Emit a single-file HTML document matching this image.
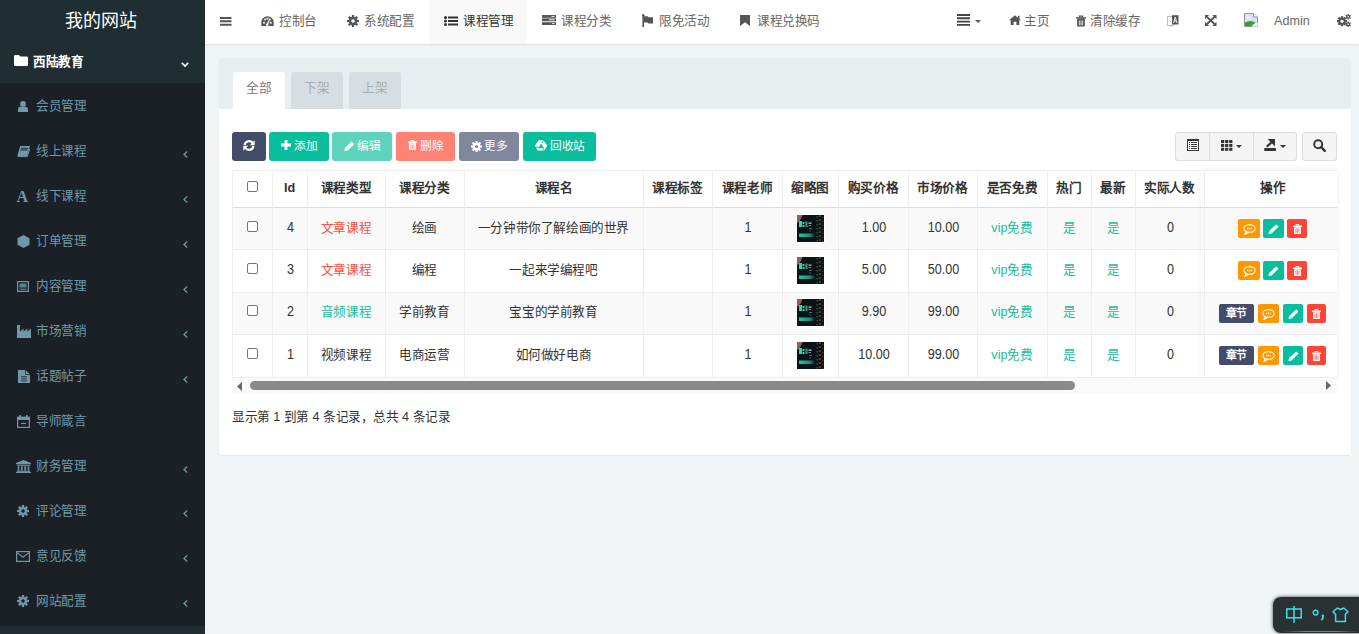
<!DOCTYPE html>
<html lang="zh-CN"><head><meta charset="utf-8"><style>
*{box-sizing:border-box;margin:0;padding:0}
html,body{width:1359px;height:634px;overflow:hidden}
body{font-family:"Liberation Sans",sans-serif;font-size:13px;color:#333;background:#f1f4f6;position:relative}
.a{position:absolute}
svg{position:absolute;overflow:visible}
.t{position:absolute;white-space:nowrap;line-height:22.222px;height:22.222px;transform:scale(.9);transform-origin:0 0}
</style></head><body>
<div class="a" style="left:0px;top:0px;width:205px;height:634px;background:#1b2026;"></div>
<div class="a" style="left:0px;top:0px;width:205px;height:83px;background:#202d33;"></div>
<div class="a" style="left:0px;top:626px;width:205px;height:8px;background:#202d33;"></div>
<div class="t" style="left:65px;top:10.8px;font-size:20.000px;color:#fff;font-weight:normal;">我的网站</div>
<svg style="left:14px;top:55px" width="14" height="11" viewBox="0 0 14 11"><path d="M0 1.2Q0 0 1.2 0H5L6.5 1.6H12.8Q14 1.6 14 2.8V9.8Q14 11 12.8 11H1.2Q0 11 0 9.8Z" fill="#fff"/></svg>
<div class="t" style="left:33px;top:52px;font-size:14.000px;color:#fff;font-weight:bold;">西陆教育</div>
<svg style="left:181px;top:62px" width="8" height="5" viewBox="0 0 8 5"><path d="M0.8 0.8L4 4L7.2 0.8" stroke="#fff" stroke-width="1.7" fill="none"/></svg>
<div class="t" style="left:36px;top:96px;font-size:14.000px;color:#6f98a8;font-weight:normal;">会员管理</div>
<div class="t" style="left:36px;top:141px;font-size:14.000px;color:#6f98a8;font-weight:normal;">线上课程</div>
<svg style="left:183px;top:150.5px" width="5" height="7" viewBox="0 0 5 7"><path d="M4.2 0.6L1 3.5L4.2 6.4" stroke="#6f98a8" stroke-width="1.3" fill="none"/></svg>
<div class="t" style="left:36px;top:186px;font-size:14.000px;color:#6f98a8;font-weight:normal;">线下课程</div>
<svg style="left:183px;top:195.5px" width="5" height="7" viewBox="0 0 5 7"><path d="M4.2 0.6L1 3.5L4.2 6.4" stroke="#6f98a8" stroke-width="1.3" fill="none"/></svg>
<div class="t" style="left:36px;top:231px;font-size:14.000px;color:#6f98a8;font-weight:normal;">订单管理</div>
<svg style="left:183px;top:240.5px" width="5" height="7" viewBox="0 0 5 7"><path d="M4.2 0.6L1 3.5L4.2 6.4" stroke="#6f98a8" stroke-width="1.3" fill="none"/></svg>
<div class="t" style="left:36px;top:276px;font-size:14.000px;color:#6f98a8;font-weight:normal;">内容管理</div>
<svg style="left:183px;top:285.5px" width="5" height="7" viewBox="0 0 5 7"><path d="M4.2 0.6L1 3.5L4.2 6.4" stroke="#6f98a8" stroke-width="1.3" fill="none"/></svg>
<div class="t" style="left:36px;top:321px;font-size:14.000px;color:#6f98a8;font-weight:normal;">市场营销</div>
<svg style="left:183px;top:330.5px" width="5" height="7" viewBox="0 0 5 7"><path d="M4.2 0.6L1 3.5L4.2 6.4" stroke="#6f98a8" stroke-width="1.3" fill="none"/></svg>
<div class="t" style="left:36px;top:366px;font-size:14.000px;color:#6f98a8;font-weight:normal;">话题帖子</div>
<svg style="left:183px;top:375.5px" width="5" height="7" viewBox="0 0 5 7"><path d="M4.2 0.6L1 3.5L4.2 6.4" stroke="#6f98a8" stroke-width="1.3" fill="none"/></svg>
<div class="t" style="left:36px;top:411px;font-size:14.000px;color:#6f98a8;font-weight:normal;">导师箴言</div>
<div class="t" style="left:36px;top:456px;font-size:14.000px;color:#6f98a8;font-weight:normal;">财务管理</div>
<svg style="left:183px;top:465.5px" width="5" height="7" viewBox="0 0 5 7"><path d="M4.2 0.6L1 3.5L4.2 6.4" stroke="#6f98a8" stroke-width="1.3" fill="none"/></svg>
<div class="t" style="left:36px;top:500.5px;font-size:14.000px;color:#6f98a8;font-weight:normal;">评论管理</div>
<svg style="left:183px;top:510.0px" width="5" height="7" viewBox="0 0 5 7"><path d="M4.2 0.6L1 3.5L4.2 6.4" stroke="#6f98a8" stroke-width="1.3" fill="none"/></svg>
<div class="t" style="left:36px;top:545.5px;font-size:14.000px;color:#6f98a8;font-weight:normal;">意见反馈</div>
<svg style="left:183px;top:555.0px" width="5" height="7" viewBox="0 0 5 7"><path d="M4.2 0.6L1 3.5L4.2 6.4" stroke="#6f98a8" stroke-width="1.3" fill="none"/></svg>
<div class="t" style="left:36px;top:590.5px;font-size:14.000px;color:#6f98a8;font-weight:normal;">网站配置</div>
<svg style="left:183px;top:600.0px" width="5" height="7" viewBox="0 0 5 7"><path d="M4.2 0.6L1 3.5L4.2 6.4" stroke="#6f98a8" stroke-width="1.3" fill="none"/></svg>
<svg style="left:18px;top:101px" width="10" height="11" viewBox="0 0 10 11"><circle cx="5" cy="2.9" r="2.9" fill="#6f98a8"/><path d="M0 11V8.3Q0 5.8 2.5 5.8H7.5Q10 5.8 10 8.3V11Z" fill="#6f98a8"/></svg>
<svg style="left:17px;top:146px" width="13" height="11" viewBox="0 0 13 11"><path d="M3.2 0H13L10 10H0.3Z" fill="#6f98a8"/><path d="M4 2.3H11M3.5 4H10.5" stroke="#1b2026" stroke-width=".9"/><path d="M0.8 10.6H10.3L12.6 3" stroke="#6f98a8" stroke-width="1" fill="none"/></svg>
<svg style="left:16px;top:190px" width="14" height="13" viewBox="0 0 14 13"><text x="0.5" y="12" font-family="Liberation Serif" font-weight="bold" font-size="16" fill="#6f98a8">A</text></svg>
<svg style="left:17px;top:235px" width="13" height="13" viewBox="0 0 13 13"><path d="M6.5 0L12.5 3.3V9.7L6.5 13L0.5 9.7V3.3Z" fill="#6f98a8"/></svg>
<svg style="left:17px;top:281px" width="12" height="11" viewBox="0 0 12 11"><rect x=".6" y=".6" width="10.8" height="9.8" fill="none" stroke="#6f98a8" stroke-width="1.2"/><rect x="2.5" y="2.5" width="7" height="4" fill="#6f98a8" opacity=".8"/><path d="M2.5 8.2H9.5" stroke="#6f98a8" stroke-width="1"/></svg>
<svg style="left:16.5px;top:325px" width="14" height="13" viewBox="0 0 14 13"><path d="M0 0H3V6.5L6.6 3.5V6.5L10.3 3.5L10.3 6.5L14 3.5V13H0Z" fill="#6f98a8"/></svg>
<svg style="left:17.5px;top:370px" width="12" height="13" viewBox="0 0 12 13"><path d="M0 0H7.5L12 4.5V13H0Z" fill="#6f98a8"/><path d="M7.5 0V4.5H12" fill="none" stroke="#1b2026" stroke-width=".7"/><path d="M3 6.6H9M3 8.8H9M3 11H9" stroke="#1b2026" stroke-width=".8"/></svg>
<svg style="left:17px;top:415px" width="13" height="13" viewBox="0 0 13 13"><rect x=".6" y="2.2" width="11.8" height="10.2" fill="none" stroke="#6f98a8" stroke-width="1.2"/><rect x="0" y="2" width="13" height="3" fill="#6f98a8"/><path d="M3.2 0V3.5M9.8 0V3.5" stroke="#6f98a8" stroke-width="1.6"/><path d="M4 8.5H9" stroke="#6f98a8" stroke-width="1.2"/></svg>
<svg style="left:15.5px;top:460px" width="15" height="13" viewBox="0 0 15 13"><path d="M7.5 0L15 3V4.2H0V3Z" fill="#6f98a8"/><rect x="1" y="4.8" width="13" height="1" fill="#6f98a8"/><path d="M2.5 6.2V10.8M5.8 6.2V10.8M9.2 6.2V10.8M12.5 6.2V10.8" stroke="#6f98a8" stroke-width="1.6"/><rect x="1" y="10.8" width="13" height="1" fill="#6f98a8"/><rect x="0" y="11.8" width="15" height="1.2" fill="#6f98a8"/></svg>
<svg style="left:17px;top:504.5px" width="12" height="12" viewBox="0 0 12 12"><g transform="translate(6,6)"><circle r="4.2" fill="#6f98a8"/><rect x="-1.1400000000000001" y="-6" width="2.2800000000000002" height="2.96" fill="#6f98a8" transform="rotate(0.0)"/><rect x="-1.1400000000000001" y="-6" width="2.2800000000000002" height="2.96" fill="#6f98a8" transform="rotate(45.0)"/><rect x="-1.1400000000000001" y="-6" width="2.2800000000000002" height="2.96" fill="#6f98a8" transform="rotate(90.0)"/><rect x="-1.1400000000000001" y="-6" width="2.2800000000000002" height="2.96" fill="#6f98a8" transform="rotate(135.0)"/><rect x="-1.1400000000000001" y="-6" width="2.2800000000000002" height="2.96" fill="#6f98a8" transform="rotate(180.0)"/><rect x="-1.1400000000000001" y="-6" width="2.2800000000000002" height="2.96" fill="#6f98a8" transform="rotate(225.0)"/><rect x="-1.1400000000000001" y="-6" width="2.2800000000000002" height="2.96" fill="#6f98a8" transform="rotate(270.0)"/><rect x="-1.1400000000000001" y="-6" width="2.2800000000000002" height="2.96" fill="#6f98a8" transform="rotate(315.0)"/><circle r="1.8" fill="#1b2026"/></g></svg>
<svg style="left:16px;top:550.5px" width="14" height="11" viewBox="0 0 14 11"><rect x=".6" y=".6" width="12.8" height="9.8" fill="none" stroke="#6f98a8" stroke-width="1.2"/><path d="M1 1.6L7 6.3L13 1.6" stroke="#6f98a8" stroke-width="1.2" fill="none"/></svg>
<svg style="left:17px;top:594.5px" width="12" height="12" viewBox="0 0 12 12"><g transform="translate(6,6)"><circle r="4.2" fill="#6f98a8"/><rect x="-1.1400000000000001" y="-6" width="2.2800000000000002" height="2.96" fill="#6f98a8" transform="rotate(0.0)"/><rect x="-1.1400000000000001" y="-6" width="2.2800000000000002" height="2.96" fill="#6f98a8" transform="rotate(45.0)"/><rect x="-1.1400000000000001" y="-6" width="2.2800000000000002" height="2.96" fill="#6f98a8" transform="rotate(90.0)"/><rect x="-1.1400000000000001" y="-6" width="2.2800000000000002" height="2.96" fill="#6f98a8" transform="rotate(135.0)"/><rect x="-1.1400000000000001" y="-6" width="2.2800000000000002" height="2.96" fill="#6f98a8" transform="rotate(180.0)"/><rect x="-1.1400000000000001" y="-6" width="2.2800000000000002" height="2.96" fill="#6f98a8" transform="rotate(225.0)"/><rect x="-1.1400000000000001" y="-6" width="2.2800000000000002" height="2.96" fill="#6f98a8" transform="rotate(270.0)"/><rect x="-1.1400000000000001" y="-6" width="2.2800000000000002" height="2.96" fill="#6f98a8" transform="rotate(315.0)"/><circle r="1.8" fill="#1b2026"/></g></svg>
<div class="a" style="left:205px;top:0px;width:1154px;height:44px;background:#fff;box-shadow:0 1px 2px rgba(0,0,0,.09)"></div>
<div class="a" style="left:429px;top:0px;width:98px;height:44px;background:#f9f9f9;"></div>
<svg style="left:219.5px;top:16px" width="12" height="10" viewBox="0 0 12 10"><path d="M0 2H11.5M0 5.3H11.5M0 8.8H11.5" stroke="#555" stroke-width="1.9"/></svg>
<svg style="left:261px;top:16px" width="13" height="10" viewBox="0 0 13 10"><path d="M0.3 10V6.5A6.2 6.2 0 0 1 12.7 6.5V10Z" fill="#555"/><circle cx="3" cy="6.8" r="1" fill="#fff"/><circle cx="4.2" cy="3.6" r="1" fill="#fff"/><circle cx="6.5" cy="2.5" r="1" fill="#fff"/><circle cx="9.9" cy="6.8" r="1" fill="#fff"/><circle cx="8.8" cy="3.6" r="1" fill="#fff"/><path d="M6.2 9L8 4.5" stroke="#fff" stroke-width="1.3"/><circle cx="6.2" cy="8.8" r="1.3" fill="#fff"/></svg>
<div class="t" style="left:279px;top:11px;font-size:14.000px;color:#666;font-weight:normal;">控制台</div>
<svg style="left:347px;top:15px" width="12" height="12" viewBox="0 0 12 12"><g transform="translate(6,6)"><circle r="4.2" fill="#555"/><rect x="-1.1400000000000001" y="-6" width="2.2800000000000002" height="2.96" fill="#555" transform="rotate(0.0)"/><rect x="-1.1400000000000001" y="-6" width="2.2800000000000002" height="2.96" fill="#555" transform="rotate(45.0)"/><rect x="-1.1400000000000001" y="-6" width="2.2800000000000002" height="2.96" fill="#555" transform="rotate(90.0)"/><rect x="-1.1400000000000001" y="-6" width="2.2800000000000002" height="2.96" fill="#555" transform="rotate(135.0)"/><rect x="-1.1400000000000001" y="-6" width="2.2800000000000002" height="2.96" fill="#555" transform="rotate(180.0)"/><rect x="-1.1400000000000001" y="-6" width="2.2800000000000002" height="2.96" fill="#555" transform="rotate(225.0)"/><rect x="-1.1400000000000001" y="-6" width="2.2800000000000002" height="2.96" fill="#555" transform="rotate(270.0)"/><rect x="-1.1400000000000001" y="-6" width="2.2800000000000002" height="2.96" fill="#555" transform="rotate(315.0)"/><circle r="1.8" fill="#fff"/></g></svg>
<div class="t" style="left:364.2px;top:11px;font-size:14.000px;color:#666;font-weight:normal;">系统配置</div>
<svg style="left:444px;top:16px" width="14" height="10" viewBox="0 0 14 10"><circle cx="1.5" cy="1.5" r="1.5" fill="#333"/><circle cx="1.5" cy="5" r="1.5" fill="#333"/><circle cx="1.5" cy="8.5" r="1.5" fill="#333"/><path d="M4 1.5H14M4 5H14M4 8.5H14" stroke="#333" stroke-width="2"/></svg>
<div class="t" style="left:463px;top:11px;font-size:14.000px;color:#333;font-weight:normal;">课程管理</div>
<svg style="left:542px;top:15px" width="14" height="10" viewBox="0 0 14 10"><rect x="0" y="0" width="14" height="2.8" fill="#555"/><rect x="0" y="3.4" width="14" height="2.8" fill="#555"/><rect x="0" y="7.2" width="14" height="2.8" fill="#555"/><path d="M9.5 1.4H12.5M7 4.8H12.5M10 8.6H12.5" stroke="#fff" stroke-width=".9"/></svg>
<div class="t" style="left:561px;top:11px;font-size:14.000px;color:#666;font-weight:normal;">课程分类</div>
<svg style="left:642px;top:14px" width="11" height="13" viewBox="0 0 11 13"><path d="M1.2 1V13" stroke="#555" stroke-width="1.6"/><circle cx="1.2" cy="1.2" r="1.2" fill="#555"/><path d="M2 2.2H5.5L6.5 3.2H11V9.5H6.5L5.5 8.5H2Z" fill="#555"/></svg>
<div class="t" style="left:659px;top:11px;font-size:14.000px;color:#666;font-weight:normal;">限免活动</div>
<svg style="left:740px;top:15px" width="10" height="11" viewBox="0 0 10 11"><path d="M0 0H10V11L5 7.3L0 11Z" fill="#555"/></svg>
<div class="t" style="left:757px;top:11px;font-size:14.000px;color:#666;font-weight:normal;">课程兑换码</div>
<svg style="left:957px;top:14px" width="13" height="12" viewBox="0 0 13 12"><path d="M0 1H13M0 4.3H13M0 7.6H13M0 10.9H13" stroke="#444" stroke-width="1.9"/></svg>
<svg style="left:975px;top:20px" width="6" height="3" viewBox="0 0 6 3"><path d="M0 0H6L3 3Z" fill="#555"/></svg>
<svg style="left:1009px;top:15px" width="12" height="10" viewBox="0 0 12 10"><path d="M6 0.3L12 5.3H10.3V10H7.4V6.8H4.6V10H1.7V5.3H0Z" fill="#555"/><rect x="9" y="0.8" width="1.6" height="3" fill="#555"/></svg>
<div class="t" style="left:1024.4px;top:11px;font-size:14.000px;color:#666;font-weight:normal;">主页</div>
<div style="position:absolute;left:1076px;top:15px;width:10px;height:12px"><svg style="left:0;top:0" width="10" height="12" viewBox="0 0 9 10"><rect x="0" y="1.6" width="9" height="1.4" fill="#555"/><path d="M3 2V.6H6V2" fill="none" stroke="#555" stroke-width="1"/><path d="M1 3.2H8V9.2Q8 10 7.2 10H1.8Q1 10 1 9.2Z" fill="#555"/><path d="M3 4.5V8.8M4.5 4.5V8.8M6 4.5V8.8" stroke="#fff" stroke-width=".7"/></svg></div>
<div class="t" style="left:1090.3px;top:11px;font-size:14.000px;color:#666;font-weight:normal;">清除缓存</div>
<svg style="left:1167px;top:14px" width="12" height="13" viewBox="0 0 12 13"><path d="M0.5 2.5H7V11.5H0.5Z" fill="#fff" stroke="#aaa" stroke-width=".8"/><path d="M5 1.2H11.5V10.5H5Z" fill="#555"/><path d="M6.5 9L8.2 3.2L10 9M7 7H9.4" stroke="#fff" stroke-width=".9" fill="none"/><path d="M2 6L4.5 9" stroke="#c88" stroke-width=".6"/><path d="M3 11.5L5 13" stroke="#aaa" stroke-width=".7"/></svg>
<svg style="left:1205px;top:15px" width="11.5" height="11" viewBox="0 0 11.5 11"><path d="M2 2L9.5 9M9.5 2L2 9" stroke="#555" stroke-width="1.9"/><path d="M0 0H4.2L0 4.2Z M11.5 0V4.2L7.3 0Z M0 11V6.8L4.2 11Z M11.5 11H7.3L11.5 6.8Z" fill="#555"/></svg>
<svg style="left:1244px;top:12px" width="14" height="15" viewBox="0 0 14 15"><path d="M0.5 1.5H9.5L13.5 5V14.5H0.5Z" fill="#d4e4f4" stroke="#8a8a8a" stroke-width=".9"/><path d="M9.5 1.5V5H13.5" fill="#fff" stroke="#8a8a8a" stroke-width=".9"/><path d="M1 14V10.5Q6 7.5 11.5 10.5L7.5 14Z" fill="#2aa52a"/><path d="M11.8 10.8L8 14.6H13.6V10.8Z" fill="#fff"/><ellipse cx="5" cy="5.5" rx="2" ry="1" fill="#fff"/></svg>
<div class="t" style="left:1274px;top:11px;font-size:14.000px;color:#666;font-weight:normal;">Admin</div>
<svg style="left:1337px;top:14px" width="14" height="13" viewBox="0 0 14 13"><g transform="translate(5,7.2)"><circle r="3.4" fill="#555"/><rect x="-1.2" y="-5" width="2.4" height="2.8" fill="#555" transform="rotate(0.0)"/><rect x="-1.2" y="-5" width="2.4" height="2.8" fill="#555" transform="rotate(45.0)"/><rect x="-1.2" y="-5" width="2.4" height="2.8" fill="#555" transform="rotate(90.0)"/><rect x="-1.2" y="-5" width="2.4" height="2.8" fill="#555" transform="rotate(135.0)"/><rect x="-1.2" y="-5" width="2.4" height="2.8" fill="#555" transform="rotate(180.0)"/><rect x="-1.2" y="-5" width="2.4" height="2.8" fill="#555" transform="rotate(225.0)"/><rect x="-1.2" y="-5" width="2.4" height="2.8" fill="#555" transform="rotate(270.0)"/><rect x="-1.2" y="-5" width="2.4" height="2.8" fill="#555" transform="rotate(315.0)"/><circle r="1.5" fill="#fff"/></g><g transform="translate(11.2,2.8)"><circle r="1.9" fill="#555"/><rect x="-0.65" y="-2.8" width="1.3" height="1.9000000000000001" fill="#555" transform="rotate(0.0)"/><rect x="-0.65" y="-2.8" width="1.3" height="1.9000000000000001" fill="#555" transform="rotate(60.0)"/><rect x="-0.65" y="-2.8" width="1.3" height="1.9000000000000001" fill="#555" transform="rotate(120.0)"/><rect x="-0.65" y="-2.8" width="1.3" height="1.9000000000000001" fill="#555" transform="rotate(180.0)"/><rect x="-0.65" y="-2.8" width="1.3" height="1.9000000000000001" fill="#555" transform="rotate(240.0)"/><rect x="-0.65" y="-2.8" width="1.3" height="1.9000000000000001" fill="#555" transform="rotate(300.0)"/><circle r="0.8" fill="#fff"/></g><g transform="translate(11.2,10.3)"><circle r="1.9" fill="#555"/><rect x="-0.65" y="-2.8" width="1.3" height="1.9000000000000001" fill="#555" transform="rotate(0.0)"/><rect x="-0.65" y="-2.8" width="1.3" height="1.9000000000000001" fill="#555" transform="rotate(60.0)"/><rect x="-0.65" y="-2.8" width="1.3" height="1.9000000000000001" fill="#555" transform="rotate(120.0)"/><rect x="-0.65" y="-2.8" width="1.3" height="1.9000000000000001" fill="#555" transform="rotate(180.0)"/><rect x="-0.65" y="-2.8" width="1.3" height="1.9000000000000001" fill="#555" transform="rotate(240.0)"/><rect x="-0.65" y="-2.8" width="1.3" height="1.9000000000000001" fill="#555" transform="rotate(300.0)"/><circle r="0.8" fill="#fff"/></g></svg>
<div class="a" style="left:219px;top:58px;width:1132px;height:397px;background:#fff;border-radius:3px;box-shadow:0 1px 1px rgba(0,0,0,.05)"></div>
<div class="a" style="left:219px;top:58px;width:1132px;height:51px;background:#e8edf0;border-radius:3px 3px 0 0"></div>
<div class="a" style="left:233px;top:72px;width:52px;height:37px;background:#fff;border-radius:3px 3px 0 0"></div>
<div class="t" style="left:233.0px;top:78px;width:57.778px;text-align:center;font-size:14.000px;color:#777;font-weight:normal;">全部</div>
<div class="a" style="left:291px;top:72px;width:52px;height:37px;background:#d6dee4;border-radius:3px 3px 0 0"></div>
<div class="t" style="left:291.0px;top:78px;width:57.778px;text-align:center;font-size:14.000px;color:#a3aeb2;font-weight:normal;">下架</div>
<div class="a" style="left:349px;top:72px;width:52px;height:37px;background:#d6dee4;border-radius:3px 3px 0 0"></div>
<div class="t" style="left:349.0px;top:78px;width:57.778px;text-align:center;font-size:14.000px;color:#a3aeb2;font-weight:normal;">上架</div>
<div class="a" style="left:232px;top:132px;width:34px;height:29px;background:#444c69;border-radius:3px"></div>
<svg style="left:243px;top:140px" width="12" height="11" viewBox="0 0 12 11"><path d="M1.6 5A4.4 4.4 0 0 1 9.9 3.6" stroke="#fff" stroke-width="2.1" fill="none"/><path d="M11.7 0.3V5.2H6.8Z" fill="#fff"/><path d="M10.4 6A4.4 4.4 0 0 1 2.1 7.4" stroke="#fff" stroke-width="2.1" fill="none"/><path d="M0.3 10.7V5.8H5.2Z" fill="#fff"/></svg>
<div class="a" style="left:269px;top:132px;width:60px;height:29px;background:#0abd9d;border-radius:3px"></div>
<svg style="left:281px;top:140px" width="10" height="10" viewBox="0 0 10 10"><path d="M5 0V10M0 5H10" stroke="#fff" stroke-width="2.8"/></svg>
<div class="t" style="left:294px;top:136px;font-size:13.000px;color:#fff;font-weight:500;">添加</div>
<div class="a" style="left:332px;top:132px;width:60px;height:29px;background:#5fd4bd;border-radius:3px"></div>
<svg style="left:344px;top:141px" width="11" height="10" viewBox="0 0 11 10"><path d="M7.6 0.6L10.4 3.2L3.6 9.6L0.4 10L0.9 6.9Z" fill="#fff"/></svg>
<div class="t" style="left:357px;top:136px;font-size:13.000px;color:#fff;font-weight:500;">编辑</div>
<div class="a" style="left:396px;top:132px;width:59px;height:29px;background:#fd8274;border-radius:3px"></div>
<svg style="left:408px;top:140px" width="9" height="10" viewBox="0 0 9 10"><rect x="0" y="1.6" width="9" height="1.4" fill="#fff"/><path d="M3 2V.6H6V2" fill="none" stroke="#fff" stroke-width="1"/><path d="M1 3.2H8V9.2Q8 10 7.2 10H1.8Q1 10 1 9.2Z" fill="#fff"/><path d="M3 4.5V8.8M4.5 4.5V8.8M6 4.5V8.8" stroke="#fd8274" stroke-width=".7"/></svg>
<div class="t" style="left:420px;top:136px;font-size:13.000px;color:#fff;font-weight:500;">删除</div>
<div class="a" style="left:459px;top:132px;width:60px;height:29px;background:#80869b;border-radius:3px"></div>
<svg style="left:470.5px;top:140.5px" width="11" height="11" viewBox="0 0 11 11"><g transform="translate(5.5,5.5)"><circle r="3.9" fill="#fff"/><rect x="-1.045" y="-5.5" width="2.09" height="2.7800000000000002" fill="#fff" transform="rotate(0.0)"/><rect x="-1.045" y="-5.5" width="2.09" height="2.7800000000000002" fill="#fff" transform="rotate(45.0)"/><rect x="-1.045" y="-5.5" width="2.09" height="2.7800000000000002" fill="#fff" transform="rotate(90.0)"/><rect x="-1.045" y="-5.5" width="2.09" height="2.7800000000000002" fill="#fff" transform="rotate(135.0)"/><rect x="-1.045" y="-5.5" width="2.09" height="2.7800000000000002" fill="#fff" transform="rotate(180.0)"/><rect x="-1.045" y="-5.5" width="2.09" height="2.7800000000000002" fill="#fff" transform="rotate(225.0)"/><rect x="-1.045" y="-5.5" width="2.09" height="2.7800000000000002" fill="#fff" transform="rotate(270.0)"/><rect x="-1.045" y="-5.5" width="2.09" height="2.7800000000000002" fill="#fff" transform="rotate(315.0)"/><circle r="1.6" fill="#80869b"/></g></svg>
<div class="t" style="left:484px;top:136px;font-size:13.000px;color:#fff;font-weight:500;">更多</div>
<div class="a" style="left:523px;top:132px;width:73px;height:29px;background:#0abd9d;border-radius:3px"></div>
<svg style="left:534.5px;top:139.7px" width="12.2" height="10.8" viewBox="0 0 12.2 10.8"><path fill-rule="evenodd" d="M3.6 0.2H8.4L12.2 5.6L9.6 10.6H2.6L0 5.6Z M6.1 3.4L9 8.2H3.2Z" fill="#fff"/><path d="M8.4 0.6L7.2 3.2M1 7L3.6 7.2M9.2 10.4L8 8" stroke="#0abd9d" stroke-width=".9"/></svg>
<div class="t" style="left:550px;top:136px;font-size:13.000px;color:#fff;font-weight:500;">回收站</div>
<div class="a" style="left:1175px;top:132px;width:122px;height:29px;background:#f4f4f4;border:1px solid #ddd;border-radius:3px"></div>
<div class="a" style="left:1209px;top:133px;width:1px;height:27px;background:#ddd;"></div>
<div class="a" style="left:1253px;top:133px;width:1px;height:27px;background:#ddd;"></div>
<div class="a" style="left:1302px;top:132px;width:35px;height:29px;background:#f4f4f4;border:1px solid #ddd;border-radius:3px"></div>
<svg style="left:1187px;top:139px" width="12" height="12" viewBox="0 0 12 12"><g shape-rendering="crispEdges"><rect x="0" y="0" width="12" height="12" fill="#333"/><rect x="1" y="2" width="10" height="9" fill="#fff"/><rect x="2" y="3" width="1" height="1" fill="#333"/><rect x="2" y="5" width="1" height="1" fill="#333"/><rect x="2" y="7" width="1" height="1" fill="#333"/><rect x="2" y="9" width="1" height="1" fill="#333"/><rect x="4" y="3" width="6" height="1" fill="#333"/><rect x="4" y="5" width="6" height="1" fill="#333"/><rect x="4" y="7" width="6" height="1" fill="#333"/><rect x="4" y="9" width="6" height="1" fill="#333"/></g></svg>
<svg style="left:1220.5px;top:140px" width="12" height="11" viewBox="0 0 12 11"><rect x="0.0" y="0.0" width="3.2" height="3" fill="#333"/><rect x="4.1" y="0.0" width="3.2" height="3" fill="#333"/><rect x="8.2" y="0.0" width="3.2" height="3" fill="#333"/><rect x="0.0" y="3.9" width="3.2" height="3" fill="#333"/><rect x="4.1" y="3.9" width="3.2" height="3" fill="#333"/><rect x="8.2" y="3.9" width="3.2" height="3" fill="#333"/><rect x="0.0" y="7.8" width="3.2" height="3" fill="#333"/><rect x="4.1" y="7.8" width="3.2" height="3" fill="#333"/><rect x="8.2" y="7.8" width="3.2" height="3" fill="#333"/></svg>
<svg style="left:1236px;top:145px" width="6" height="3" viewBox="0 0 6 3"><path d="M0 0H6L3 3Z" fill="#333"/></svg>
<svg style="left:1264px;top:139px" width="12" height="12" viewBox="0 0 12 12"><rect x="0.3" y="9" width="11.6" height="3" fill="#333"/><path d="M3.5 0H11V7.2Z" fill="#333"/><path d="M2.8 7.8L7.5 3.2" stroke="#333" stroke-width="2.2"/></svg>
<svg style="left:1279.5px;top:145px" width="6" height="3" viewBox="0 0 6 3"><path d="M0 0H6L3 3Z" fill="#333"/></svg>
<svg style="left:1313px;top:139px" width="13" height="13" viewBox="0 0 13 13"><circle cx="5.2" cy="5.2" r="4" fill="none" stroke="#333" stroke-width="1.9"/><path d="M8.2 8.2L11.8 11.8" stroke="#333" stroke-width="2.4" stroke-linecap="round"/></svg>
<div class="a" style="left:232px;top:208px;width:1105px;height:42px;background:#f9f9f9;"></div>
<div class="a" style="left:232px;top:292px;width:1105px;height:43px;background:#f9f9f9;"></div>
<div class="a" style="left:232px;top:170px;width:1105px;height:1px;background:#eee;"></div>
<div class="a" style="left:232px;top:207px;width:1105px;height:1px;background:#ddd;"></div>
<div class="a" style="left:232px;top:249px;width:1105px;height:1px;background:#eee;"></div>
<div class="a" style="left:232px;top:292px;width:1105px;height:1px;background:#eee;"></div>
<div class="a" style="left:232px;top:334px;width:1105px;height:1px;background:#eee;"></div>
<div class="a" style="left:232px;top:377px;width:1105px;height:1px;background:#eee;"></div>
<div class="a" style="left:232px;top:170px;width:1px;height:207px;background:#eee;"></div>
<div class="a" style="left:272px;top:170px;width:1px;height:207px;background:#eee;"></div>
<div class="a" style="left:307px;top:170px;width:1px;height:207px;background:#eee;"></div>
<div class="a" style="left:385px;top:170px;width:1px;height:207px;background:#eee;"></div>
<div class="a" style="left:464px;top:170px;width:1px;height:207px;background:#eee;"></div>
<div class="a" style="left:643px;top:170px;width:1px;height:207px;background:#eee;"></div>
<div class="a" style="left:712px;top:170px;width:1px;height:207px;background:#eee;"></div>
<div class="a" style="left:782px;top:170px;width:1px;height:207px;background:#eee;"></div>
<div class="a" style="left:838px;top:170px;width:1px;height:207px;background:#eee;"></div>
<div class="a" style="left:908px;top:170px;width:1px;height:207px;background:#eee;"></div>
<div class="a" style="left:977px;top:170px;width:1px;height:207px;background:#eee;"></div>
<div class="a" style="left:1047px;top:170px;width:1px;height:207px;background:#eee;"></div>
<div class="a" style="left:1091px;top:170px;width:1px;height:207px;background:#eee;"></div>
<div class="a" style="left:1135px;top:170px;width:1px;height:207px;background:#eee;"></div>
<div class="a" style="left:1204px;top:170px;width:1px;height:207px;background:#eee;"></div>
<div class="a" style="left:247px;top:181px;width:11px;height:11px;border:1px solid #767676;border-radius:2px;background:#fff"></div>
<div class="t" style="left:272.0px;top:178px;width:38.889px;text-align:center;font-size:14.000px;color:#333;font-weight:bold;">Id</div>
<div class="t" style="left:307.0px;top:178px;width:86.667px;text-align:center;font-size:14.000px;color:#333;font-weight:bold;">课程类型</div>
<div class="t" style="left:385.0px;top:178px;width:87.778px;text-align:center;font-size:14.000px;color:#333;font-weight:bold;">课程分类</div>
<div class="t" style="left:464.0px;top:178px;width:198.889px;text-align:center;font-size:14.000px;color:#333;font-weight:bold;">课程名</div>
<div class="t" style="left:643.0px;top:178px;width:76.667px;text-align:center;font-size:14.000px;color:#333;font-weight:bold;">课程标签</div>
<div class="t" style="left:712.0px;top:178px;width:77.778px;text-align:center;font-size:14.000px;color:#333;font-weight:bold;">课程老师</div>
<div class="t" style="left:782.0px;top:178px;width:62.222px;text-align:center;font-size:14.000px;color:#333;font-weight:bold;">缩略图</div>
<div class="t" style="left:838.0px;top:178px;width:77.778px;text-align:center;font-size:14.000px;color:#333;font-weight:bold;">购买价格</div>
<div class="t" style="left:908.0px;top:178px;width:76.667px;text-align:center;font-size:14.000px;color:#333;font-weight:bold;">市场价格</div>
<div class="t" style="left:977.0px;top:178px;width:77.778px;text-align:center;font-size:14.000px;color:#333;font-weight:bold;">是否免费</div>
<div class="t" style="left:1047.0px;top:178px;width:48.889px;text-align:center;font-size:14.000px;color:#333;font-weight:bold;">热门</div>
<div class="t" style="left:1091.0px;top:178px;width:48.889px;text-align:center;font-size:14.000px;color:#333;font-weight:bold;">最新</div>
<div class="t" style="left:1135.0px;top:178px;width:76.667px;text-align:center;font-size:14.000px;color:#333;font-weight:bold;">实际人数</div>
<div class="a" style="left:247px;top:221.0px;width:11px;height:11px;border:1px solid #767676;border-radius:2px;background:#fff"></div>
<div class="t" style="left:272.5px;top:215.5px;width:38.889px;text-align:center;font-size:14.000px;color:#333;font-weight:normal;transform:scale(.9,1.0);">4</div>
<div class="t" style="left:307.0px;top:217.5px;width:86.667px;text-align:center;font-size:14.000px;color:#fb5040;font-weight:normal;">文章课程</div>
<div class="t" style="left:385.0px;top:217.5px;width:87.778px;text-align:center;font-size:14.000px;color:#333;font-weight:normal;">绘画</div>
<div class="t" style="left:464.0px;top:217.5px;width:198.889px;text-align:center;font-size:14.000px;color:#333;font-weight:normal;">一分钟带你了解绘画的世界</div>
<div class="t" style="left:712.5px;top:215.5px;width:77.778px;text-align:center;font-size:14.000px;color:#333;font-weight:normal;transform:scale(.9,1.0);">1</div>
<svg style="left:796.5px;top:215.0px" width="27" height="27" viewBox="0 0 27 27"><defs><linearGradient id="tg" x1="0" x2="1"><stop offset="0" stop-color="#22c4a0"/><stop offset=".7" stop-color="#178a77"/><stop offset="1" stop-color="#0b1418"/></linearGradient></defs><rect width="27" height="27" fill="#0b1318"/><path d="M0 0H5.5Q4.5 4.5 1 7.5L0 7.5Z" fill="#c9786c" opacity=".75"/><rect x="2" y="6" width="3" height="6" fill="#2dd8a8"/><rect x="5.5" y="7" width="2" height="2" fill="#2dd8a8"/><rect x="5.5" y="10" width="2" height="2" fill="#2dd8a8"/><rect x="8.5" y="6.5" width="2" height="5.5" fill="#2dc8a0" opacity=".8"/><rect x="11.5" y="7.5" width="3" height="1.3" fill="#ddd" opacity=".85"/><rect x="11.5" y="10" width="2.5" height="1" fill="#bbb" opacity=".7"/><rect x="12" y="13" width="3" height="1" fill="#999" opacity=".6"/><rect x="12" y="15.5" width="2" height="1" fill="#888" opacity=".5"/><rect x="2" y="18.5" width="16" height="3.5" fill="url(#tg)"/><path d="M20.2 1V27" stroke="#4a9a30" stroke-width="1.2" stroke-dasharray="1.5 2.5" opacity=".7"/><path d="M23 0V27" stroke="#c07a28" stroke-width="1.3" stroke-dasharray="2 2" opacity=".65"/><path d="M25.8 2V27" stroke="#b86a20" stroke-width="1.1" stroke-dasharray="1 3" opacity=".55"/><rect x="-.5" y="-.5" width="28" height="28" fill="none" stroke="#fff" stroke-width="1"/></svg>
<div class="t" style="left:838.5px;top:215.5px;width:77.778px;text-align:center;font-size:14.000px;color:#333;font-weight:normal;transform:scale(.9,1.0);">1.00</div>
<div class="t" style="left:908.5px;top:215.5px;width:76.667px;text-align:center;font-size:14.000px;color:#333;font-weight:normal;transform:scale(.9,1.0);">10.00</div>
<div class="t" style="left:977.0px;top:217.5px;width:77.778px;text-align:center;font-size:14.000px;color:#18bc9c;font-weight:normal;">vip免费</div>
<div class="t" style="left:1047.0px;top:217.5px;width:48.889px;text-align:center;font-size:14.000px;color:#18bc9c;font-weight:normal;">是</div>
<div class="t" style="left:1091.0px;top:217.5px;width:48.889px;text-align:center;font-size:14.000px;color:#18bc9c;font-weight:normal;">是</div>
<div class="t" style="left:1135.5px;top:215.5px;width:76.667px;text-align:center;font-size:14.000px;color:#333;font-weight:normal;transform:scale(.9,1.0);">0</div>
<div class="a" style="left:247px;top:263.0px;width:11px;height:11px;border:1px solid #767676;border-radius:2px;background:#fff"></div>
<div class="t" style="left:272.5px;top:257.5px;width:38.889px;text-align:center;font-size:14.000px;color:#333;font-weight:normal;transform:scale(.9,1.0);">3</div>
<div class="t" style="left:307.0px;top:259.5px;width:86.667px;text-align:center;font-size:14.000px;color:#fb5040;font-weight:normal;">文章课程</div>
<div class="t" style="left:385.0px;top:259.5px;width:87.778px;text-align:center;font-size:14.000px;color:#333;font-weight:normal;">编程</div>
<div class="t" style="left:464.0px;top:259.5px;width:198.889px;text-align:center;font-size:14.000px;color:#333;font-weight:normal;">一起来学编程吧</div>
<div class="t" style="left:712.5px;top:257.5px;width:77.778px;text-align:center;font-size:14.000px;color:#333;font-weight:normal;transform:scale(.9,1.0);">1</div>
<svg style="left:796.5px;top:257.0px" width="27" height="27" viewBox="0 0 27 27"><defs><linearGradient id="tg" x1="0" x2="1"><stop offset="0" stop-color="#22c4a0"/><stop offset=".7" stop-color="#178a77"/><stop offset="1" stop-color="#0b1418"/></linearGradient></defs><rect width="27" height="27" fill="#0b1318"/><path d="M0 0H5.5Q4.5 4.5 1 7.5L0 7.5Z" fill="#c9786c" opacity=".75"/><rect x="2" y="6" width="3" height="6" fill="#2dd8a8"/><rect x="5.5" y="7" width="2" height="2" fill="#2dd8a8"/><rect x="5.5" y="10" width="2" height="2" fill="#2dd8a8"/><rect x="8.5" y="6.5" width="2" height="5.5" fill="#2dc8a0" opacity=".8"/><rect x="11.5" y="7.5" width="3" height="1.3" fill="#ddd" opacity=".85"/><rect x="11.5" y="10" width="2.5" height="1" fill="#bbb" opacity=".7"/><rect x="12" y="13" width="3" height="1" fill="#999" opacity=".6"/><rect x="12" y="15.5" width="2" height="1" fill="#888" opacity=".5"/><rect x="2" y="18.5" width="16" height="3.5" fill="url(#tg)"/><path d="M20.2 1V27" stroke="#4a9a30" stroke-width="1.2" stroke-dasharray="1.5 2.5" opacity=".7"/><path d="M23 0V27" stroke="#c07a28" stroke-width="1.3" stroke-dasharray="2 2" opacity=".65"/><path d="M25.8 2V27" stroke="#b86a20" stroke-width="1.1" stroke-dasharray="1 3" opacity=".55"/><rect x="-.5" y="-.5" width="28" height="28" fill="none" stroke="#fff" stroke-width="1"/></svg>
<div class="t" style="left:838.5px;top:257.5px;width:77.778px;text-align:center;font-size:14.000px;color:#333;font-weight:normal;transform:scale(.9,1.0);">5.00</div>
<div class="t" style="left:908.5px;top:257.5px;width:76.667px;text-align:center;font-size:14.000px;color:#333;font-weight:normal;transform:scale(.9,1.0);">50.00</div>
<div class="t" style="left:977.0px;top:259.5px;width:77.778px;text-align:center;font-size:14.000px;color:#18bc9c;font-weight:normal;">vip免费</div>
<div class="t" style="left:1047.0px;top:259.5px;width:48.889px;text-align:center;font-size:14.000px;color:#18bc9c;font-weight:normal;">是</div>
<div class="t" style="left:1091.0px;top:259.5px;width:48.889px;text-align:center;font-size:14.000px;color:#18bc9c;font-weight:normal;">是</div>
<div class="t" style="left:1135.5px;top:257.5px;width:76.667px;text-align:center;font-size:14.000px;color:#333;font-weight:normal;transform:scale(.9,1.0);">0</div>
<div class="a" style="left:247px;top:305.0px;width:11px;height:11px;border:1px solid #767676;border-radius:2px;background:#fff"></div>
<div class="t" style="left:272.5px;top:299.5px;width:38.889px;text-align:center;font-size:14.000px;color:#333;font-weight:normal;transform:scale(.9,1.0);">2</div>
<div class="t" style="left:307.0px;top:301.5px;width:86.667px;text-align:center;font-size:14.000px;color:#18bc9c;font-weight:normal;">音频课程</div>
<div class="t" style="left:385.0px;top:301.5px;width:87.778px;text-align:center;font-size:14.000px;color:#333;font-weight:normal;">学前教育</div>
<div class="t" style="left:464.0px;top:301.5px;width:198.889px;text-align:center;font-size:14.000px;color:#333;font-weight:normal;">宝宝的学前教育</div>
<div class="t" style="left:712.5px;top:299.5px;width:77.778px;text-align:center;font-size:14.000px;color:#333;font-weight:normal;transform:scale(.9,1.0);">1</div>
<svg style="left:796.5px;top:299.0px" width="27" height="27" viewBox="0 0 27 27"><defs><linearGradient id="tg" x1="0" x2="1"><stop offset="0" stop-color="#22c4a0"/><stop offset=".7" stop-color="#178a77"/><stop offset="1" stop-color="#0b1418"/></linearGradient></defs><rect width="27" height="27" fill="#0b1318"/><path d="M0 0H5.5Q4.5 4.5 1 7.5L0 7.5Z" fill="#c9786c" opacity=".75"/><rect x="2" y="6" width="3" height="6" fill="#2dd8a8"/><rect x="5.5" y="7" width="2" height="2" fill="#2dd8a8"/><rect x="5.5" y="10" width="2" height="2" fill="#2dd8a8"/><rect x="8.5" y="6.5" width="2" height="5.5" fill="#2dc8a0" opacity=".8"/><rect x="11.5" y="7.5" width="3" height="1.3" fill="#ddd" opacity=".85"/><rect x="11.5" y="10" width="2.5" height="1" fill="#bbb" opacity=".7"/><rect x="12" y="13" width="3" height="1" fill="#999" opacity=".6"/><rect x="12" y="15.5" width="2" height="1" fill="#888" opacity=".5"/><rect x="2" y="18.5" width="16" height="3.5" fill="url(#tg)"/><path d="M20.2 1V27" stroke="#4a9a30" stroke-width="1.2" stroke-dasharray="1.5 2.5" opacity=".7"/><path d="M23 0V27" stroke="#c07a28" stroke-width="1.3" stroke-dasharray="2 2" opacity=".65"/><path d="M25.8 2V27" stroke="#b86a20" stroke-width="1.1" stroke-dasharray="1 3" opacity=".55"/><rect x="-.5" y="-.5" width="28" height="28" fill="none" stroke="#fff" stroke-width="1"/></svg>
<div class="t" style="left:838.5px;top:299.5px;width:77.778px;text-align:center;font-size:14.000px;color:#333;font-weight:normal;transform:scale(.9,1.0);">9.90</div>
<div class="t" style="left:908.5px;top:299.5px;width:76.667px;text-align:center;font-size:14.000px;color:#333;font-weight:normal;transform:scale(.9,1.0);">99.00</div>
<div class="t" style="left:977.0px;top:301.5px;width:77.778px;text-align:center;font-size:14.000px;color:#18bc9c;font-weight:normal;">vip免费</div>
<div class="t" style="left:1047.0px;top:301.5px;width:48.889px;text-align:center;font-size:14.000px;color:#18bc9c;font-weight:normal;">是</div>
<div class="t" style="left:1091.0px;top:301.5px;width:48.889px;text-align:center;font-size:14.000px;color:#18bc9c;font-weight:normal;">是</div>
<div class="t" style="left:1135.5px;top:299.5px;width:76.667px;text-align:center;font-size:14.000px;color:#333;font-weight:normal;transform:scale(.9,1.0);">0</div>
<div class="a" style="left:247px;top:348.0px;width:11px;height:11px;border:1px solid #767676;border-radius:2px;background:#fff"></div>
<div class="t" style="left:272.5px;top:342.5px;width:38.889px;text-align:center;font-size:14.000px;color:#333;font-weight:normal;transform:scale(.9,1.0);">1</div>
<div class="t" style="left:307.0px;top:344.5px;width:86.667px;text-align:center;font-size:14.000px;color:#333;font-weight:normal;">视频课程</div>
<div class="t" style="left:385.0px;top:344.5px;width:87.778px;text-align:center;font-size:14.000px;color:#333;font-weight:normal;">电商运营</div>
<div class="t" style="left:464.0px;top:344.5px;width:198.889px;text-align:center;font-size:14.000px;color:#333;font-weight:normal;">如何做好电商</div>
<div class="t" style="left:712.5px;top:342.5px;width:77.778px;text-align:center;font-size:14.000px;color:#333;font-weight:normal;transform:scale(.9,1.0);">1</div>
<svg style="left:796.5px;top:342.0px" width="27" height="27" viewBox="0 0 27 27"><defs><linearGradient id="tg" x1="0" x2="1"><stop offset="0" stop-color="#22c4a0"/><stop offset=".7" stop-color="#178a77"/><stop offset="1" stop-color="#0b1418"/></linearGradient></defs><rect width="27" height="27" fill="#0b1318"/><path d="M0 0H5.5Q4.5 4.5 1 7.5L0 7.5Z" fill="#c9786c" opacity=".75"/><rect x="2" y="6" width="3" height="6" fill="#2dd8a8"/><rect x="5.5" y="7" width="2" height="2" fill="#2dd8a8"/><rect x="5.5" y="10" width="2" height="2" fill="#2dd8a8"/><rect x="8.5" y="6.5" width="2" height="5.5" fill="#2dc8a0" opacity=".8"/><rect x="11.5" y="7.5" width="3" height="1.3" fill="#ddd" opacity=".85"/><rect x="11.5" y="10" width="2.5" height="1" fill="#bbb" opacity=".7"/><rect x="12" y="13" width="3" height="1" fill="#999" opacity=".6"/><rect x="12" y="15.5" width="2" height="1" fill="#888" opacity=".5"/><rect x="2" y="18.5" width="16" height="3.5" fill="url(#tg)"/><path d="M20.2 1V27" stroke="#4a9a30" stroke-width="1.2" stroke-dasharray="1.5 2.5" opacity=".7"/><path d="M23 0V27" stroke="#c07a28" stroke-width="1.3" stroke-dasharray="2 2" opacity=".65"/><path d="M25.8 2V27" stroke="#b86a20" stroke-width="1.1" stroke-dasharray="1 3" opacity=".55"/><rect x="-.5" y="-.5" width="28" height="28" fill="none" stroke="#fff" stroke-width="1"/></svg>
<div class="t" style="left:838.5px;top:342.5px;width:77.778px;text-align:center;font-size:14.000px;color:#333;font-weight:normal;transform:scale(.9,1.0);">10.00</div>
<div class="t" style="left:908.5px;top:342.5px;width:76.667px;text-align:center;font-size:14.000px;color:#333;font-weight:normal;transform:scale(.9,1.0);">99.00</div>
<div class="t" style="left:977.0px;top:344.5px;width:77.778px;text-align:center;font-size:14.000px;color:#18bc9c;font-weight:normal;">vip免费</div>
<div class="t" style="left:1047.0px;top:344.5px;width:48.889px;text-align:center;font-size:14.000px;color:#18bc9c;font-weight:normal;">是</div>
<div class="t" style="left:1091.0px;top:344.5px;width:48.889px;text-align:center;font-size:14.000px;color:#18bc9c;font-weight:normal;">是</div>
<div class="t" style="left:1135.5px;top:342.5px;width:76.667px;text-align:center;font-size:14.000px;color:#333;font-weight:normal;transform:scale(.9,1.0);">0</div>
<div class="a" style="left:1201px;top:170px;width:136px;height:208px;background:#fff;box-shadow:0 0 6px rgba(0,0,0,.075)"></div>
<div class="a" style="left:1201px;top:208px;width:136px;height:41px;background:#f9f9f9;"></div>
<div class="a" style="left:1201px;top:292px;width:136px;height:42px;background:#f9f9f9;"></div>
<div class="a" style="left:1201px;top:170px;width:136px;height:1px;background:#eee;"></div>
<div class="a" style="left:1201px;top:207px;width:136px;height:1px;background:#ddd;"></div>
<div class="a" style="left:1201px;top:249px;width:136px;height:1px;background:#eee;"></div>
<div class="a" style="left:1201px;top:292px;width:136px;height:1px;background:#eee;"></div>
<div class="a" style="left:1201px;top:334px;width:136px;height:1px;background:#eee;"></div>
<div class="a" style="left:1201px;top:377px;width:136px;height:1px;background:#eee;"></div>
<div class="a" style="left:1204px;top:170px;width:1px;height:208px;background:#eee;"></div>
<div class="t" style="left:1206.0px;top:178px;width:148.889px;text-align:center;font-size:14.000px;color:#333;font-weight:bold;">操作</div>
<div class="a" style="left:1238px;top:219.0px;width:22px;height:19px;background:#fe9800;border-radius:2px"></div>
<div class="a" style="left:1263px;top:219.0px;width:21px;height:19px;background:#0abd9d;border-radius:2px"></div>
<div class="a" style="left:1287px;top:219.0px;width:20px;height:19px;background:#fe4535;border-radius:2px"></div>
<svg style="left:1242.5px;top:223.5px" width="13" height="11" viewBox="0 0 13 11"><ellipse cx="6.5" cy="4.5" rx="5.6" ry="3.8" fill="none" stroke="#fff" stroke-width="1.1"/><path d="M3.2 7.8L1.8 10.5L5.8 8.2" fill="none" stroke="#fff" stroke-width="1.1" stroke-linejoin="round"/><path d="M4 4.5H9" stroke="#fff" stroke-width="1.5" stroke-dasharray="1.2 .6"/></svg>
<svg style="left:1268.0px;top:224.0px" width="11" height="10" viewBox="0 0 11 10"><path d="M8.2 0.4L10.6 2.6L3.6 9.4L0.4 9.9L1.1 6.9Z" fill="#fff"/><path d="M1.5 7L3.3 8.8" stroke="#0abd9d" stroke-width=".6"/></svg>
<svg style="left:1292.5px;top:223.5px" width="9" height="10" viewBox="0 0 9 10"><rect x="0" y="1.6" width="9" height="1.4" fill="#fff"/><path d="M3 2V.6H6V2" fill="none" stroke="#fff" stroke-width="1"/><path d="M1 3.2H8V9.2Q8 10 7.2 10H1.8Q1 10 1 9.2Z" fill="#fff"/><path d="M3 4.5V8.8M4.5 4.5V8.8M6 4.5V8.8" stroke="#fe4535" stroke-width=".7"/></svg>
<div class="a" style="left:1238px;top:261.0px;width:22px;height:19px;background:#fe9800;border-radius:2px"></div>
<div class="a" style="left:1263px;top:261.0px;width:21px;height:19px;background:#0abd9d;border-radius:2px"></div>
<div class="a" style="left:1287px;top:261.0px;width:20px;height:19px;background:#fe4535;border-radius:2px"></div>
<svg style="left:1242.5px;top:265.5px" width="13" height="11" viewBox="0 0 13 11"><ellipse cx="6.5" cy="4.5" rx="5.6" ry="3.8" fill="none" stroke="#fff" stroke-width="1.1"/><path d="M3.2 7.8L1.8 10.5L5.8 8.2" fill="none" stroke="#fff" stroke-width="1.1" stroke-linejoin="round"/><path d="M4 4.5H9" stroke="#fff" stroke-width="1.5" stroke-dasharray="1.2 .6"/></svg>
<svg style="left:1268.0px;top:266.0px" width="11" height="10" viewBox="0 0 11 10"><path d="M8.2 0.4L10.6 2.6L3.6 9.4L0.4 9.9L1.1 6.9Z" fill="#fff"/><path d="M1.5 7L3.3 8.8" stroke="#0abd9d" stroke-width=".6"/></svg>
<svg style="left:1292.5px;top:265.5px" width="9" height="10" viewBox="0 0 9 10"><rect x="0" y="1.6" width="9" height="1.4" fill="#fff"/><path d="M3 2V.6H6V2" fill="none" stroke="#fff" stroke-width="1"/><path d="M1 3.2H8V9.2Q8 10 7.2 10H1.8Q1 10 1 9.2Z" fill="#fff"/><path d="M3 4.5V8.8M4.5 4.5V8.8M6 4.5V8.8" stroke="#fe4535" stroke-width=".7"/></svg>
<div class="a" style="left:1219px;top:304.0px;width:35px;height:19px;background:#444c69;border-radius:2px"></div>
<div class="t" style="left:1219.0px;top:302.8px;width:38.889px;text-align:center;font-size:12.000px;color:#fff;font-weight:bold;">章节</div>
<div class="a" style="left:1258px;top:304.0px;width:21px;height:19px;background:#fe9800;border-radius:2px"></div>
<div class="a" style="left:1283px;top:304.0px;width:20px;height:19px;background:#0abd9d;border-radius:2px"></div>
<div class="a" style="left:1307px;top:304.0px;width:19px;height:19px;background:#fe4535;border-radius:2px"></div>
<svg style="left:1262.0px;top:308.5px" width="13" height="11" viewBox="0 0 13 11"><ellipse cx="6.5" cy="4.5" rx="5.6" ry="3.8" fill="none" stroke="#fff" stroke-width="1.1"/><path d="M3.2 7.8L1.8 10.5L5.8 8.2" fill="none" stroke="#fff" stroke-width="1.1" stroke-linejoin="round"/><path d="M4 4.5H9" stroke="#fff" stroke-width="1.5" stroke-dasharray="1.2 .6"/></svg>
<svg style="left:1287.5px;top:309.0px" width="11" height="10" viewBox="0 0 11 10"><path d="M8.2 0.4L10.6 2.6L3.6 9.4L0.4 9.9L1.1 6.9Z" fill="#fff"/><path d="M1.5 7L3.3 8.8" stroke="#0abd9d" stroke-width=".6"/></svg>
<svg style="left:1312.0px;top:308.5px" width="9" height="10" viewBox="0 0 9 10"><rect x="0" y="1.6" width="9" height="1.4" fill="#fff"/><path d="M3 2V.6H6V2" fill="none" stroke="#fff" stroke-width="1"/><path d="M1 3.2H8V9.2Q8 10 7.2 10H1.8Q1 10 1 9.2Z" fill="#fff"/><path d="M3 4.5V8.8M4.5 4.5V8.8M6 4.5V8.8" stroke="#fe4535" stroke-width=".7"/></svg>
<div class="a" style="left:1219px;top:346.0px;width:35px;height:19px;background:#444c69;border-radius:2px"></div>
<div class="t" style="left:1219.0px;top:344.8px;width:38.889px;text-align:center;font-size:12.000px;color:#fff;font-weight:bold;">章节</div>
<div class="a" style="left:1258px;top:346.0px;width:21px;height:19px;background:#fe9800;border-radius:2px"></div>
<div class="a" style="left:1283px;top:346.0px;width:20px;height:19px;background:#0abd9d;border-radius:2px"></div>
<div class="a" style="left:1307px;top:346.0px;width:19px;height:19px;background:#fe4535;border-radius:2px"></div>
<svg style="left:1262.0px;top:350.5px" width="13" height="11" viewBox="0 0 13 11"><ellipse cx="6.5" cy="4.5" rx="5.6" ry="3.8" fill="none" stroke="#fff" stroke-width="1.1"/><path d="M3.2 7.8L1.8 10.5L5.8 8.2" fill="none" stroke="#fff" stroke-width="1.1" stroke-linejoin="round"/><path d="M4 4.5H9" stroke="#fff" stroke-width="1.5" stroke-dasharray="1.2 .6"/></svg>
<svg style="left:1287.5px;top:351.0px" width="11" height="10" viewBox="0 0 11 10"><path d="M8.2 0.4L10.6 2.6L3.6 9.4L0.4 9.9L1.1 6.9Z" fill="#fff"/><path d="M1.5 7L3.3 8.8" stroke="#0abd9d" stroke-width=".6"/></svg>
<svg style="left:1312.0px;top:350.5px" width="9" height="10" viewBox="0 0 9 10"><rect x="0" y="1.6" width="9" height="1.4" fill="#fff"/><path d="M3 2V.6H6V2" fill="none" stroke="#fff" stroke-width="1"/><path d="M1 3.2H8V9.2Q8 10 7.2 10H1.8Q1 10 1 9.2Z" fill="#fff"/><path d="M3 4.5V8.8M4.5 4.5V8.8M6 4.5V8.8" stroke="#fe4535" stroke-width=".7"/></svg>
<div class="a" style="left:232px;top:377.5px;width:1105px;height:15.5px;background:#fafafa;"></div>
<div class="a" style="left:250px;top:381px;width:825px;height:9px;background:#8a8a8a;border-radius:4.5px"></div>
<svg style="left:237px;top:381.5px" width="5" height="9" viewBox="0 0 5 9"><path d="M5 0V9L0 4.5Z" fill="#666"/></svg>
<svg style="left:1326px;top:381px" width="5" height="9" viewBox="0 0 5 9"><path d="M0 0V9L5 4.5Z" fill="#666"/></svg>
<div class="t" style="left:232px;top:406.5px;font-size:14.000px;color:#333;font-weight:normal;">显示第 1 到第 4 条记录，总共 4 条记录</div>
<div class="a" style="left:1273px;top:597px;width:95px;height:36px;background:#2b3033;border-radius:8px;box-shadow:0 0 3px 1px rgba(0,0,0,.45)"></div>
<svg style="left:1286px;top:606px" width="16" height="17" viewBox="0 0 16 17"><rect x=".8" y="3" width="14.4" height="8.8" fill="none" stroke="#2fe4ee" stroke-width="1.5"/><path d="M8 0V17" stroke="#2fe4ee" stroke-width="1.5"/></svg>
<svg style="left:1311.5px;top:609px" width="14" height="14" viewBox="0 0 14 14"><circle cx="3.6" cy="3.6" r="2.4" fill="none" stroke="#2fe4ee" stroke-width="1.4"/><path d="M9.6 6.6H11.2Q11.2 9.8 9.3 11" stroke="#2fe4ee" stroke-width="1.7" fill="none"/></svg>
<svg style="left:1332px;top:607px" width="17" height="16" viewBox="0 0 17 16"><path d="M5.3 1L8.5 2.5L11.7 1L16 4.8L13.4 7.4V14.6H3.6V7.4L1 4.8Z" fill="none" stroke="#2fe4ee" stroke-width="1.5" stroke-linejoin="round"/></svg>
<div class="a" style="left:1283px;top:630.5px;width:76px;height:1.5px;background:linear-gradient(90deg,rgba(47,228,238,0),rgba(47,228,238,.6) 30%,rgba(47,228,238,.6) 70%,rgba(47,228,238,0))"></div>
</body></html>
